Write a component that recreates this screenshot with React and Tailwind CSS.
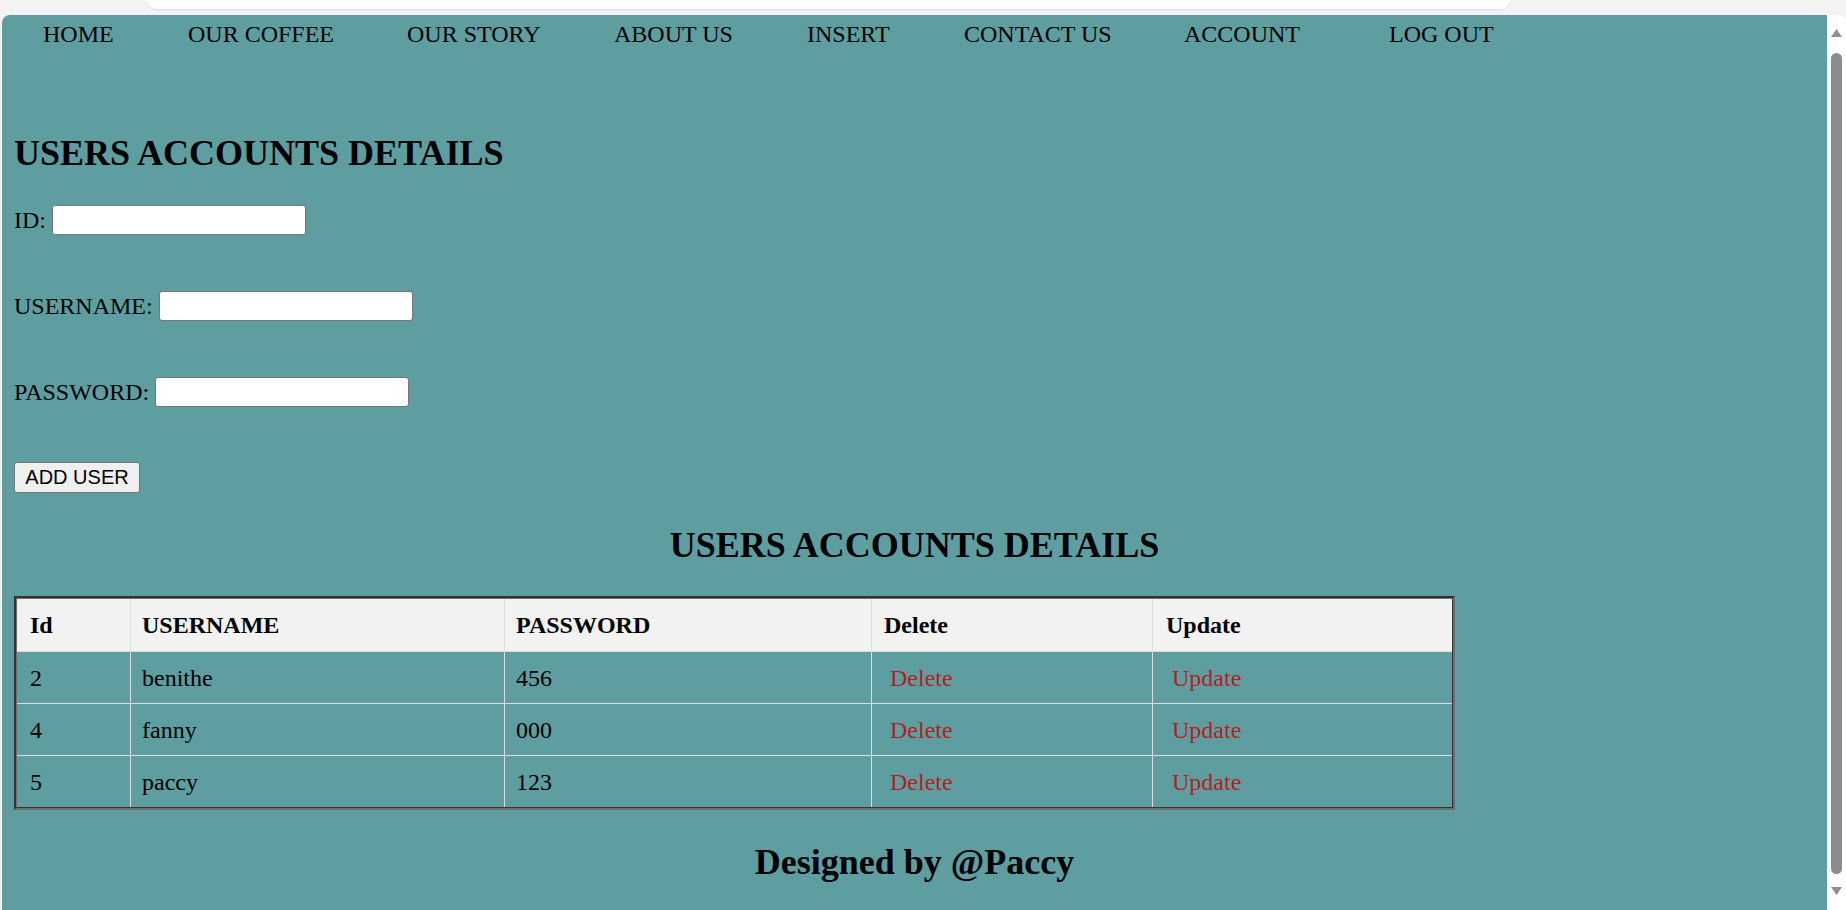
import React from "react";

const navItems = [
  { label: "HOME", w: "w-[145px]" },
  { label: "OUR COFFEE", w: "w-[219px]" },
  { label: "OUR STORY", w: "w-[207px]" },
  { label: "ABOUT US", w: "w-[193px]" },
  { label: "INSERT", w: "w-[157px]" },
  { label: "CONTACT US", w: "w-[220px]" },
  { label: "ACCOUNT", w: "w-[205px]" },
  { label: "LOG OUT", w: "w-[120px]" },
];

const rows = [
  { id: "2", username: "benithe", password: "456" },
  { id: "4", username: "fanny", password: "000" },
  { id: "5", username: "paccy", password: "123" },
];

function Field({ label }) {
  return (
    <div className="flex items-center gap-[6px] h-[30px]">
      <span className="leading-[27px]">{label}</span>
      <input
        type="text"
        className="w-[254px] h-[30px] bg-white border border-[#767676] rounded-[3px] outline-none"
      />
    </div>
  );
}

export default function App() {
  const serif = { fontFamily: '"Liberation Serif", "Times New Roman", serif' };
  return (
    <div className="w-[1846px] h-[910px] overflow-hidden bg-[#f3f3f3] flex flex-col">
      {/* browser chrome strip */}
      <div className="h-[15px] shrink-0">
        <div className="ml-[147px] w-[1363px] h-[9px] bg-white rounded-b-[10px] shadow-[0_1px_2px_rgba(0,0,0,0.08)]" />
      </div>

      <div className="flex flex-1 ml-[2px] rounded-t-[8px] overflow-hidden">
        {/* page */}
        <div className="flex-1 bg-[#5f9ea0] text-black text-[24px] pt-[6px]" style={serif}>
          <nav className="flex pl-[41px] h-[27px] leading-[27px]">
            {navItems.map((n) => (
              <a key={n.label} className={`${n.w} shrink-0 whitespace-nowrap`}>
                {n.label}
              </a>
            ))}
          </nav>

          <div className="px-[12px]">
            <h2 className="mt-[85px] text-[36px] font-bold leading-[40px]">
              USERS ACCOUNTS DETAILS
            </h2>

            <div className="mt-[32px]">
              <Field label="ID:" />
            </div>
            <div className="mt-[56px]">
              <Field label="USERNAME:" />
            </div>
            <div className="mt-[56px]">
              <Field label="PASSWORD:" />
            </div>

            <button
              className="mt-[55px] w-[126px] h-[31px] bg-[#efefef] border border-[#767676] rounded-[3px] text-[20px] leading-[23px] text-black"
              style={{ fontFamily: '"Liberation Sans", Arial, sans-serif' }}
            >
              ADD USER
            </button>

            <h2 className="mt-[31px] text-[36px] font-bold leading-[40px] text-center">
              USERS ACCOUNTS DETAILS
            </h2>

            {/* table */}
            <div className="mt-[31px] w-[1441px] border-t-2 border-l-2 border-t-[#333] border-l-[#333] border-b-2 border-r-2 border-b-[#6e6e6e] border-r-[#6e6e6e]">
              <div className="border-t border-l border-t-[#6e6e6e] border-l-[#6e6e6e] border-b border-r border-b-[#333] border-r-[#333]">
                <div className="grid grid-cols-[113px_374px_367px_281px_1fr] h-[52px] bg-[#f2f2f2] font-bold">
                  <div className="flex items-center pl-[13px]">Id</div>
                  <div className="flex items-center pl-[11px] border-l border-[#dddddd]">USERNAME</div>
                  <div className="flex items-center pl-[11px] border-l border-[#dddddd]">PASSWORD</div>
                  <div className="flex items-center pl-[12px] border-l border-[#dddddd]">Delete</div>
                  <div className="flex items-center pl-[13px] border-l border-[#dddddd]">Update</div>
                </div>
                {rows.map((r) => (
                  <div
                    key={r.id}
                    className="grid grid-cols-[113px_374px_367px_281px_1fr] h-[52px] border-t border-[#dddddd]"
                  >
                    <div className="flex items-center pl-[13px]">{r.id}</div>
                    <div className="flex items-center pl-[11px] border-l border-[#dddddd]">{r.username}</div>
                    <div className="flex items-center pl-[11px] border-l border-[#dddddd]">{r.password}</div>
                    <div className="flex items-center pl-[18px] border-l border-[#dddddd]">
                      <a className="text-[#b22222]">Delete</a>
                    </div>
                    <div className="flex items-center pl-[19px] border-l border-[#dddddd]">
                      <a className="text-[#b22222]">Update</a>
                    </div>
                  </div>
                ))}
              </div>
            </div>

            <h2 className="mt-[32px] text-[36px] font-bold leading-[40px] text-center">
              Designed by @Paccy
            </h2>
          </div>
        </div>

        {/* scrollbar */}
        <div className="w-[19px] bg-white flex flex-col items-center shrink-0">
          <svg className="mt-[14px] shrink-0" width="11" height="8" viewBox="0 0 11 8">
            <polygon points="0,8 5.5,0 11,8" fill="#8f8f8f" />
          </svg>
          <div className="mt-[16px] w-[11px] h-[821px] rounded-full bg-[#8b8b8b] shrink-0" />
          <svg className="mt-[13px] shrink-0" width="11" height="8" viewBox="0 0 11 8">
            <polygon points="0,0 11,0 5.5,8" fill="#8f8f8f" />
          </svg>
        </div>
      </div>
    </div>
  );
}
